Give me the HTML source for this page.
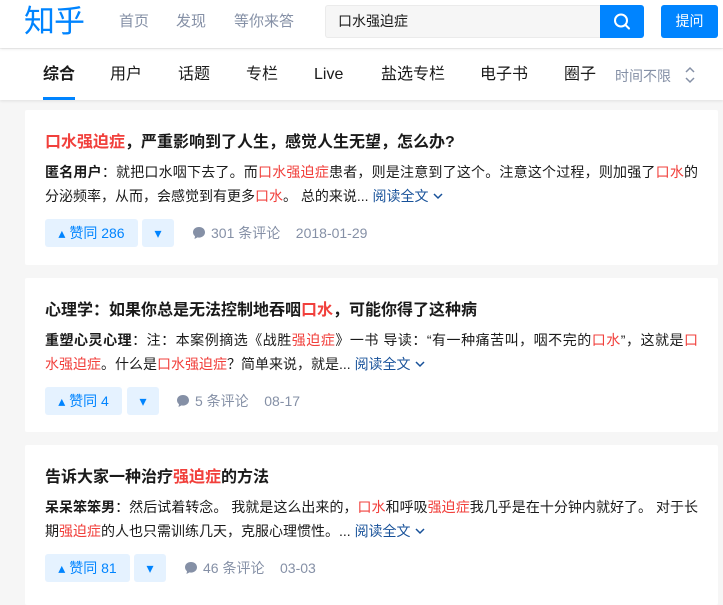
<!DOCTYPE html>
<html><head><meta charset="utf-8"><style>
*{margin:0;padding:0;box-sizing:border-box}
body{width:723px;height:586px;overflow:hidden;background:#f6f6f6;font-family:"Liberation Sans","Noto Sans CJK SC",sans-serif;color:#1a1a1a;position:relative}
.hdr{position:absolute;left:0;top:0;width:723px;height:48px;background:#fff;box-shadow:0 1px 3px rgba(26,26,26,.1);z-index:2}
.logo{position:absolute;left:24px;top:2px;font-size:31px;color:#0084ff;font-weight:normal;letter-spacing:-1px;line-height:40px}
.nav{position:absolute;top:12px;font-size:15px;color:#8590a6;line-height:20px}
.search{position:absolute;left:325px;top:5px;width:275px;height:33px;background:#f6f6f6;border:1px solid #ebebeb;border-right:none;border-radius:3px 0 0 3px;font-size:14px;line-height:31px;padding-left:12px}
.sbtn{position:absolute;left:600px;top:5px;width:44px;height:33px;background:#0084ff;border-radius:0 3px 3px 0}
.ask{position:absolute;left:661px;top:5px;width:57px;height:33px;background:#0084ff;border-radius:3px;color:#fff;font-size:14px;line-height:33px;text-align:center}
.tabs{position:absolute;left:0;top:49px;width:723px;height:51px;background:#fff;box-shadow:0 1px 3px rgba(26,26,26,.1);z-index:1}
.tab{position:absolute;top:15px;font-size:16px;line-height:22px;color:#1a1a1a}
.ul{position:absolute;left:43px;top:48px;width:32px;height:3px;background:#0084ff}
.card{position:absolute;left:25px;width:693px;background:#fff;border-radius:2px;padding:20px 20px 0 20px}
.t{font-size:16px;font-weight:bold;line-height:26px;height:26px;white-space:nowrap}
.b{font-size:14px;line-height:24px;margin-top:4px}
.l{height:24px;white-space:nowrap;overflow:hidden}
.j{text-align:justify;text-align-last:justify;width:653px}
.r{color:#f1403c}
.a{color:#175199}
.acts{margin-top:11px;height:28px;position:relative}
.vote{position:absolute;top:0;height:28px;background:#e5f2ff;color:#0084ff;border-radius:3px;font-size:14px;line-height:28px;white-space:nowrap;text-align:center}
.meta{position:absolute;top:0;line-height:28px;font-size:14px;color:#8590a6;white-space:nowrap}
.ci{display:inline-block;vertical-align:-2px;margin-right:5px}
</style></head><body>
<div class="hdr">
<div class="logo">知乎</div>
<div class="nav" style="left:119px">首页</div>
<div class="nav" style="left:176px">发现</div>
<div class="nav" style="left:234px">等你来答</div>
<div class="search">口水强迫症</div>
<div class="sbtn"><svg width="44" height="33" viewBox="0 0 44 33"><circle cx="21" cy="15.5" r="6" fill="none" stroke="#fff" stroke-width="2"/><path d="M25.5 20l3.5 3.5" stroke="#fff" stroke-width="2" stroke-linecap="round"/></svg></div>
<div class="ask">提问</div>
</div>
<div class="tabs">
<div class="tab" style="left:43px;font-weight:bold">综合</div>
<div class="tab" style="left:110px">用户</div>
<div class="tab" style="left:178px">话题</div>
<div class="tab" style="left:246px">专栏</div>
<div class="tab" style="left:314px">Live</div>
<div class="tab" style="left:381px">盐选专栏</div>
<div class="tab" style="left:480px">电子书</div>
<div class="tab" style="left:564px">圈子</div>
<div class="tab" style="left:615px;font-size:14px;color:#8590a6;top:16px">时间不限</div>
<svg style="position:absolute;left:684px;top:17px" width="12" height="18" viewBox="0 0 12 18"><path d="M2 6l4-4 4 4M2 12l4 4 4-4" fill="none" stroke="#8590a6" stroke-width="1.5"/></svg>
<div class="ul"></div>
</div>

<div class="card" style="top:110px;height:155px">
<div class="t"><span class="r">口水强迫症</span>，严重影响到了人生，感觉人生无望，怎么办?</div>
<div class="b"><div class="l j"><b>匿名用户</b>：就把口水咽下去了。而<span class="r">口水强迫症</span>患者，则是注意到了这个。注意这个过程，则加强了<span class="r">口水</span>的</div>
<div class="l">分泌频率，从而，会感觉到有更多<span class="r">口水</span>。 总的来说... <span class="a">阅读全文 <svg width="12" height="10" viewBox="0 0 12 10"><path d="M2 3l4 4 4-4" fill="none" stroke="#175199" stroke-width="1.5"/></svg></span></div></div>
<div class="acts"><div class="vote" style="left:0;width:93px">▴ 赞同 286</div><div class="vote" style="left:97px;width:32px">▾</div><div class="meta" style="left:147px"><svg class="ci" width="14" height="14" viewBox="0 0 14 14"><path d="M7 1C3.5 1 1 3.3 1 6.3c0 1.6.8 3 2 4L2.5 13l3-1.6c.5.1 1 .2 1.5.2 3.5 0 6-2.3 6-5.3S10.5 1 7 1z" fill="#8590a6"/></svg>301 条评论 &nbsp;&nbsp; 2018-01-29</div></div>
</div>

<div class="card" style="top:278px;height:154px">
<div class="t">心理学：如果你总是无法控制地吞咽<span class="r">口水</span>，可能你得了这种病</div>
<div class="b"><div class="l j"><b>重塑心灵心理</b>：注：本案例摘选《战胜<span class="r">强迫症</span>》一书 导读：“有一种痛苦叫，咽不完的<span class="r">口水</span>”，这就是<span class="r">口</span></div>
<div class="l"><span class="r">水强迫症</span>。什么是<span class="r">口水强迫症</span>？简单来说，就是... <span class="a">阅读全文 <svg width="12" height="10" viewBox="0 0 12 10"><path d="M2 3l4 4 4-4" fill="none" stroke="#175199" stroke-width="1.5"/></svg></span></div></div>
<div class="acts"><div class="vote" style="left:0;width:77px">▴ 赞同 4</div><div class="vote" style="left:82px;width:32px">▾</div><div class="meta" style="left:131px"><svg class="ci" width="14" height="14" viewBox="0 0 14 14"><path d="M7 1C3.5 1 1 3.3 1 6.3c0 1.6.8 3 2 4L2.5 13l3-1.6c.5.1 1 .2 1.5.2 3.5 0 6-2.3 6-5.3S10.5 1 7 1z" fill="#8590a6"/></svg>5 条评论 &nbsp;&nbsp; 08-17</div></div>
</div>

<div class="card" style="top:445px;height:160px">
<div class="t">告诉大家一种治疗<span class="r">强迫症</span>的方法</div>
<div class="b"><div class="l j"><b>呆呆笨笨男</b>：然后试着转念。 我就是这么出来的，<span class="r">口水</span>和呼吸<span class="r">强迫症</span>我几乎是在十分钟内就好了。 对于长</div>
<div class="l">期<span class="r">强迫症</span>的人也只需训练几天，克服心理惯性。... <span class="a">阅读全文 <svg width="12" height="10" viewBox="0 0 12 10"><path d="M2 3l4 4 4-4" fill="none" stroke="#175199" stroke-width="1.5"/></svg></span></div></div>
<div class="acts"><div class="vote" style="left:0;width:85px">▴ 赞同 81</div><div class="vote" style="left:89px;width:32px">▾</div><div class="meta" style="left:139px"><svg class="ci" width="14" height="14" viewBox="0 0 14 14"><path d="M7 1C3.5 1 1 3.3 1 6.3c0 1.6.8 3 2 4L2.5 13l3-1.6c.5.1 1 .2 1.5.2 3.5 0 6-2.3 6-5.3S10.5 1 7 1z" fill="#8590a6"/></svg>46 条评论 &nbsp;&nbsp; 03-03</div></div>
</div>
</body></html>
